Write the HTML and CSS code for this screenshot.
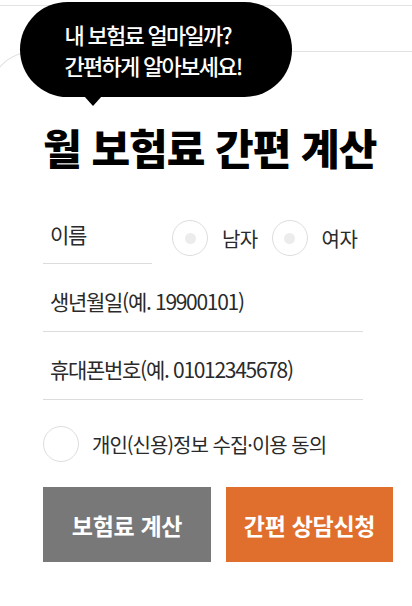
FILE: index.html
```html
<!DOCTYPE html>
<html lang="ko">
<head>
    <meta charset="UTF-8">
    <meta name="viewport" content="width=device-width, initial-scale=1.0">
    <title>월 보험료 간편 계산</title>
    <link rel="stylesheet" href="styles.css">
</head>
<body>
    <div class="top-line"></div>

    <div class="bubble">
        <p>내 보험료 얼마일까?<br>간편하게 알아보세요!</p>
    </div>

    <div class="card">
        <h2>월 보험료 간편 계산</h2>

        <form id="calcForm">
            <div class="name-row">
                <input type="text" class="field name-field" placeholder="이름">
                <label class="radio"><input type="radio" name="gender" value="m"><span class="dot"></span>남자</label>
                <label class="radio"><input type="radio" name="gender" value="f"><span class="dot"></span>여자</label>
            </div>

            <input type="text" class="field" placeholder="생년월일(예. 19900101)">
            <input type="text" class="field" placeholder="휴대폰번호(예. 01012345678)">

            <label class="agree"><input type="checkbox"><span class="circle"></span>개인(신용)정보 수집·이용 동의</label>

            <div class="buttons">
                <button type="button" class="btn btn-calc">보험료 계산</button>
                <button type="button" class="btn btn-apply">간편 상담신청</button>
            </div>
        </form>
    </div>
</body>
</html>
```

FILE: styles.css
```css
* {
    box-sizing: border-box;
}
body {
    font-family: "Noto Sans CJK KR", "Noto Sans", sans-serif;
    background-color: #fff;
    color: #333;
    margin: 0;
    height: 606px;
    overflow: hidden;
}
.top-line {
    height: 51px;
    border-top: 1px solid #e2e2e2;
    margin-top: 5px;
}
.bubble {
    position: absolute;
    top: 2px;
    left: 20px;
    width: 272px;
    height: 95px;
    background-color: #000;
    border-radius: 48px;
    display: flex;
    align-items: center;
    justify-content: center;
}
.bubble::after {
    content: "";
    position: absolute;
    left: 64px;
    bottom: -9px;
    border-left: 9px solid transparent;
    border-right: 9px solid transparent;
    border-top: 10px solid #000;
}
.bubble p {
    margin: 0 0 0 -6px;
    color: #fff;
    font-size: 22px;
    font-weight: 500;
    line-height: 31px;
    letter-spacing: -1.7px;
    text-align: left;
}
.card {
    margin-top: -5px;
    margin-left: -12px;
    border-top: 1px solid #e2e2e2;
    border-left: 1px solid #e2e2e2;
    border-top-left-radius: 46px;
    padding: 70px 19px 0 54px;
}
h2 {
    margin: 0 0 40px;
    font-size: 42px;
    font-weight: 800;
    color: #000;
    letter-spacing: -1px;
    line-height: 50px;
    text-align: center;
    padding-right: 19px;
    white-space: nowrap;
}
.field {
    display: block;
    width: 320px;
    height: 68px;
    border: none;
    border-bottom: 1px solid #dcdcdc;
    padding: 7px 7px 0;
    font-family: inherit;
    font-size: 21px;
    letter-spacing: -1.3px;
    color: #222;
    background: none;
    outline: none;
}
.field::placeholder {
    color: #2a2a2a;
}
.name-row {
    display: flex;
    align-items: center;
    height: 52px;
}
.name-field {
    width: 109px;
    height: 52px;
    padding: 0 7px 8px;
    margin-right: 20px;
}
.radio {
    display: flex;
    align-items: center;
    font-size: 20px;
    letter-spacing: -0.6px;
    color: #2a2a2a;
    margin-right: 14px;
    cursor: pointer;
}
.radio input,
.agree input {
    display: none;
}
.dot {
    width: 36px;
    height: 36px;
    border: 1px solid #ddd;
    border-radius: 50%;
    margin-right: 14px;
    display: flex;
    align-items: center;
    justify-content: center;
}
.dot::after {
    content: "";
    width: 11px;
    height: 11px;
    border-radius: 50%;
    background-color: #ececec;
}
.agree {
    display: flex;
    align-items: center;
    font-size: 20px;
    color: #2a2a2a;
    letter-spacing: -1px;
    margin-top: 26px;
    cursor: pointer;
}
.circle {
    width: 36px;
    height: 36px;
    border: 1px solid #ddd;
    border-radius: 50%;
    margin-right: 13px;
}
.buttons {
    display: flex;
    gap: 15px;
    margin-top: 25px;
}
.btn {
    width: 168px;
    height: 75px;
    border: none;
    font-family: inherit;
    font-size: 23px;
    font-weight: 700;
    letter-spacing: -0.3px;
    color: #fff;
    cursor: pointer;
}
.btn-calc {
    background-color: #787878;
}
.btn-apply {
    background-color: #e06f2e;
    width: 167px;
}
```
